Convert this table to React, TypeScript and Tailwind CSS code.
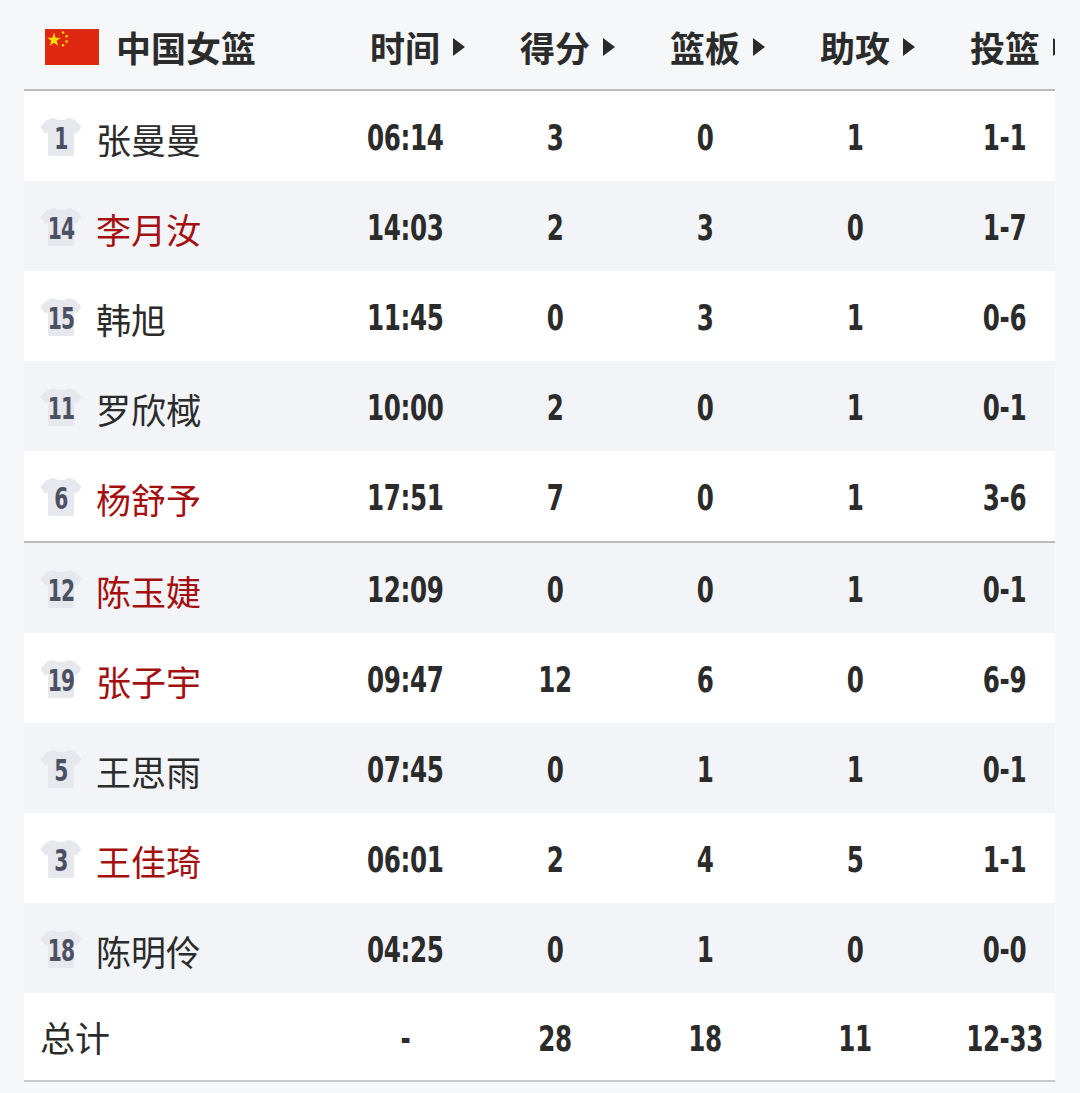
import React from "react";

type Row = { no: string; name: string; red?: boolean; time: string; pts: string; reb: string; ast: string; fg: string };

const starters: Row[] = [
  { no: "1", name: "张曼曼", time: "06:14", pts: "3", reb: "0", ast: "1", fg: "1-1" },
  { no: "14", name: "李月汝", red: true, time: "14:03", pts: "2", reb: "3", ast: "0", fg: "1-7" },
  { no: "15", name: "韩旭", time: "11:45", pts: "0", reb: "3", ast: "1", fg: "0-6" },
  { no: "11", name: "罗欣棫", time: "10:00", pts: "2", reb: "0", ast: "1", fg: "0-1" },
  { no: "6", name: "杨舒予", red: true, time: "17:51", pts: "7", reb: "0", ast: "1", fg: "3-6" },
];
const bench: Row[] = [
  { no: "12", name: "陈玉婕", red: true, time: "12:09", pts: "0", reb: "0", ast: "1", fg: "0-1" },
  { no: "19", name: "张子宇", red: true, time: "09:47", pts: "12", reb: "6", ast: "0", fg: "6-9" },
  { no: "5", name: "王思雨", time: "07:45", pts: "0", reb: "1", ast: "1", fg: "0-1" },
  { no: "3", name: "王佳琦", red: true, time: "06:01", pts: "2", reb: "4", ast: "5", fg: "1-1" },
  { no: "18", name: "陈明伶", time: "04:25", pts: "0", reb: "1", ast: "0", fg: "0-0" },
];

const cjk = "font-['Noto_Sans_CJK_SC','Noto_Sans',sans-serif]";
const num = "font-['DejaVu_Sans_Condensed','Liberation_Sans',sans-serif] font-bold";

function Flag() {
  return (
    <svg width="54" height="36" viewBox="0 0 30 20" className="shrink-0">
      <rect width="30" height="20" fill="#de2910" />
      <g fill="#ffde00">
        <polygon points="5,2 5.9,4.8 8.8,4.8 6.5,6.5 7.3,9.3 5,7.6 2.7,9.3 3.5,6.5 1.2,4.8 4.1,4.8" />
        <circle cx="10" cy="2" r="0.7" />
        <circle cx="12" cy="4" r="0.7" />
        <circle cx="12" cy="7" r="0.7" />
        <circle cx="10" cy="9" r="0.7" />
      </g>
    </svg>
  );
}

function Jersey({ no }: { no: string }) {
  return (
    <div className="relative w-[42px] h-[40px] shrink-0">
      <svg width="42" height="40" viewBox="0 0 42 40" className="absolute inset-0">
        <path
          d="M13 1 L7 3 L1 9 Q0 10 1 11 L5 16 Q6 17 7 16 L8 15 L8 37 Q8 39 10 39 L32 39 Q34 39 34 37 L34 15 L35 16 Q36 17 37 16 L41 11 Q42 10 41 9 L35 3 L29 1 Q21 5 13 1 Z"
          fill="#e6e8ee"
        />
      </svg>
      <span
        className={`absolute inset-0 pt-[4px] flex items-center justify-center text-[30px] leading-none text-[#4b5163] ${num} scale-x-[0.75] tracking-[-1px]`}
      >
        {no}
      </span>
    </div>
  );
}

function Tri() {
  return (
    <svg width="12" height="18" viewBox="0 0 12 18" className="absolute left-full ml-[13px] top-1/2 -translate-y-1/2">
      <polygon points="0,0 12,9 0,18" fill="#2b2b2b" />
    </svg>
  );
}

function HeadCell({ label }: { label: string }) {
  return (
    <div className="w-[150px] shrink-0 flex justify-center">
      <span className={`relative text-[35px] font-bold text-[#2b2b2b] ${cjk}`}>
        {label}
        <Tri />
      </span>
    </div>
  );
}

function NumCell({ v }: { v: string }) {
  return (
    <div className="w-[150px] shrink-0 flex justify-center">
      <span className={`inline-block text-[36px] leading-none text-[#2b2b2b] ${num} scale-x-[0.76] tracking-[-0.5px]`}>{v}</span>
    </div>
  );
}

function PlayerRow({ r, gray }: { r: Row; gray: boolean }) {
  return (
    <div className={`flex items-center h-[90px] pt-[4px] ${gray ? "bg-[#f3f4f8]" : "bg-white"}`}>
      <div className="w-[306px] shrink-0 flex items-center pl-[16px] gap-[14px]">
        <div className="-mt-[2px]">
          <Jersey no={r.no} />
        </div>
        <span className={`text-[35px] leading-none ${cjk} ${r.red ? "text-[#a3100f]" : "text-[#2b2b2b]"}`}>{r.name}</span>
      </div>
      <NumCell v={r.time} />
      <NumCell v={r.pts} />
      <NumCell v={r.reb} />
      <NumCell v={r.ast} />
      <NumCell v={r.fg} />
    </div>
  );
}

export default function App() {
  return (
    <div className="w-[1080px] h-[1093px] bg-[#f6f7f9] pl-[24px] pr-[25px] overflow-hidden">
      <div className="w-[1031px] overflow-hidden">
        <div className="w-[1056px]">
          <div className="h-[91px] pt-[5px] flex items-center border-b-2 border-[#bdbdbd] bg-[#f6f7f9]">
            <div className="w-[306px] shrink-0 flex items-center pl-[21px] gap-[17px]">
              <Flag />
              <span className={`text-[35px] font-bold text-[#2b2b2b] ${cjk}`}>中国女篮</span>
            </div>
            <HeadCell label="时间" />
            <HeadCell label="得分" />
            <HeadCell label="篮板" />
            <HeadCell label="助攻" />
            <HeadCell label="投篮" />
          </div>
          {starters.map((r, i) => (
            <PlayerRow key={r.no} r={r} gray={i % 2 === 1} />
          ))}
          <div className="h-[2px] bg-[#bdbdbd]" />
          {bench.map((r, i) => (
            <PlayerRow key={r.no} r={r} gray={i % 2 === 0} />
          ))}
          <div className="flex items-center h-[89px] pt-[4px] bg-white border-b-2 border-[#c8c8c8]">
            <div className="w-[306px] shrink-0 pl-[16px]">
              <span className={`text-[35px] leading-none text-[#2b2b2b] ${cjk}`}>总计</span>
            </div>
            <NumCell v="-" />
            <NumCell v="28" />
            <NumCell v="18" />
            <NumCell v="11" />
            <NumCell v="12-33" />
          </div>
        </div>
      </div>
    </div>
  );
}
